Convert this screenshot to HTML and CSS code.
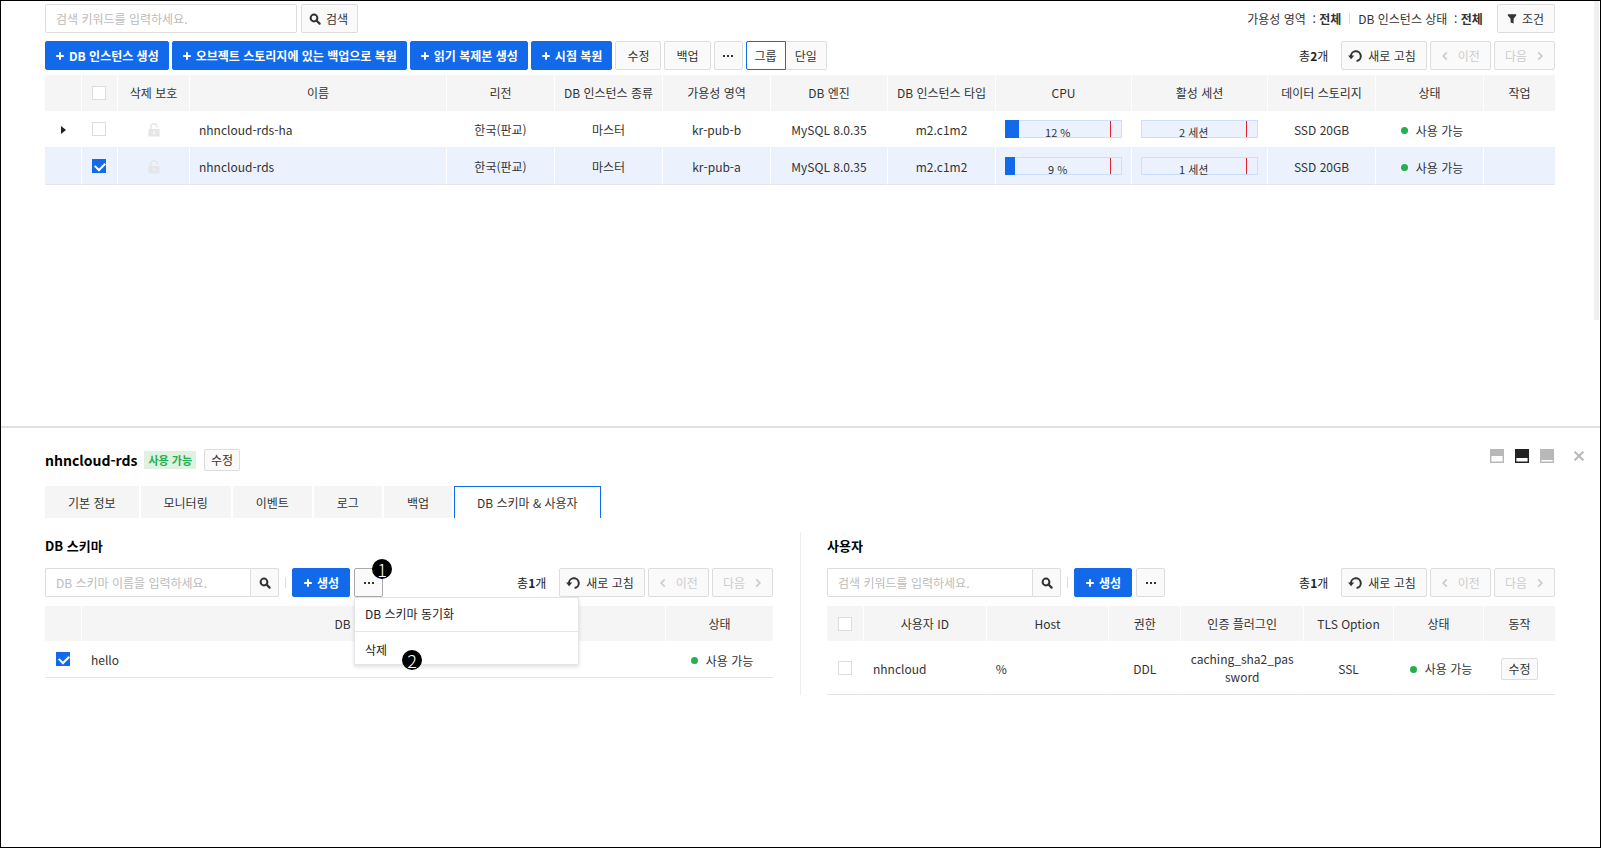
FILE: index.html
```html
<!DOCTYPE html>
<html lang="ko">
<head>
<meta charset="utf-8">
<meta name="viewport" content="width=device-width, initial-scale=1">
<title>DB 인스턴스</title>
<link rel="stylesheet" href="styles.css">
</head>
<body>
<svg class="sprite" aria-hidden="true">
  <symbol id="i-search" viewBox="0 0 12 12"><circle cx="5" cy="5" r="3.4" fill="none" stroke="currentColor" stroke-width="2"/><path d="M7.5 7.5 L10.6 10.6" stroke="currentColor" stroke-width="2.2" stroke-linecap="round"/></symbol>
  <symbol id="i-plus" viewBox="0 0 8 8"><path d="M4 0.2V7.8M0.2 4H7.8" stroke="currentColor" stroke-width="2"/></symbol>
  <symbol id="i-dots" viewBox="0 0 10 4"><path d="M0 1h2v2H0zM4 1h2v2H4zM8 1h2v2H8z" fill="currentColor"/></symbol>
  <symbol id="i-refresh" viewBox="0 0 14 14"><path d="M3 7.6A4.9 4.9 0 1 1 8.6 12" fill="none" stroke="currentColor" stroke-width="2"/><path d="M0 6.4H6.2L3.1 10.2Z" fill="currentColor"/></symbol>
  <symbol id="i-prev" viewBox="0 0 8 10"><path d="M5.8 1.4L2.2 5L5.8 8.6" fill="none" stroke="currentColor" stroke-width="1.7"/></symbol>
  <symbol id="i-next" viewBox="0 0 8 10"><path d="M2.2 1.4L5.8 5L2.2 8.6" fill="none" stroke="currentColor" stroke-width="1.7"/></symbol>
  <symbol id="i-filter" viewBox="0 0 10 10"><path d="M0.8 0.3H9.2V1.6L6.6 4.8V9.6L3.6 8.4V4.8L0.8 1.6Z" fill="currentColor"/></symbol>
  <symbol id="i-lock" viewBox="0 0 12 14"><path d="M2.8 6V3.8A2.9 2.9 0 0 1 8.9 3.6V4.6" fill="none" stroke="currentColor" stroke-width="1.5"/><path fill-rule="evenodd" d="M1 6H11Q11.6 6 11.6 6.6V13Q11.6 13.6 11 13.6H1Q0.4 13.6 0.4 13V6.6Q0.4 6 1 6ZM5.3 8.6V11.2H6.7V8.6Z" fill="currentColor"/></symbol>
  <symbol id="i-caret" viewBox="0 0 5 8"><path d="M0 0L5 4L0 8Z" fill="currentColor"/></symbol>
  <symbol id="i-pane-full" viewBox="0 0 14 14"><path fill-rule="evenodd" d="M0 0H14V14H0ZM1.4 7V12.6H12.6V7Z" fill="currentColor"/></symbol>
  <symbol id="i-pane-half" viewBox="0 0 14 14"><path fill-rule="evenodd" d="M0 0H14V14H0ZM1.4 9V12.6H12.6V9Z" fill="currentColor"/></symbol>
  <symbol id="i-pane-min" viewBox="0 0 14 14"><path fill-rule="evenodd" d="M0 0H14V14H0ZM1.4 11V12.6H12.6V11Z" fill="currentColor"/></symbol>
  <symbol id="i-close" viewBox="0 0 10 10"><path d="M0.6 0.6L9.4 9.4M9.4 0.6L0.6 9.4" stroke="currentColor" stroke-width="2"/></symbol>
</svg>

<div class="page">
  <main class="list-pane">
    <div class="bar">
      <form class="bar-group">
        <input class="field field-wide" type="text" placeholder="검색 키워드를 입력하세요." aria-label="검색 키워드">
        <button class="btn btn-search" type="button"><svg class="ic12"><use href="#i-search"/></svg>검색</button>
      </form>
      <div class="bar-group filters">
        <span>가용성 영역&nbsp; : <b>전체</b></span>
        <span class="sep"></span>
        <span>DB 인스턴스 상태&nbsp; : <b>전체</b></span>
        <button class="btn btn-filter" type="button"><svg class="ic10"><use href="#i-filter"/></svg>조건</button>
      </div>
    </div>

    <div class="bar">
      <div class="bar-group actions">
        <button class="btn primary" type="button"><svg class="ic8"><use href="#i-plus"/></svg>DB 인스턴스 생성</button>
        <button class="btn primary" type="button"><svg class="ic8"><use href="#i-plus"/></svg>오브젝트 스토리지에 있는 백업으로 복원</button>
        <button class="btn primary" type="button"><svg class="ic8"><use href="#i-plus"/></svg>읽기 복제본 생성</button>
        <button class="btn primary" type="button"><svg class="ic8"><use href="#i-plus"/></svg>시점 복원</button>
        <button class="btn" type="button">수정</button>
        <button class="btn" type="button">백업</button>
        <button class="btn btn-more" type="button" aria-label="더 보기"><svg class="dots"><use href="#i-dots"/></svg></button>
        <div class="segment">
          <button class="btn seg on" type="button">그룹</button><button class="btn seg" type="button">단일</button>
        </div>
      </div>
      <div class="bar-group pager">
        <span class="total">총<b>2</b>개</span>
        <button class="btn btn-refresh" type="button"><svg class="ic14"><use href="#i-refresh"/></svg>새로 고침</button>
        <button class="btn btn-page" type="button" disabled><svg class="chev"><use href="#i-prev"/></svg>이전</button>
        <button class="btn btn-page" type="button" disabled>다음<svg class="chev"><use href="#i-next"/></svg></button>
      </div>
    </div>

    <table class="grid instances">
      <colgroup><col class="c36"><col class="c36"><col class="c72"><col><col class="c108"><col class="c108"><col class="c108"><col class="c117"><col class="c108"><col class="c136"><col class="c136"><col class="c108"><col class="c108"><col class="c72"></colgroup>
      <thead>
        <tr><th></th><th><input class="check" type="checkbox" aria-label="전체 선택"></th><th>삭제 보호</th><th>이름</th><th>리전</th><th>DB 인스턴스 종류</th><th>가용성 영역</th><th>DB 엔진</th><th>DB 인스턴스 타입</th><th>CPU</th><th>활성 세션</th><th>데이터 스토리지</th><th>상태</th><th>작업</th></tr>
      </thead>
      <tbody>
        <tr>
          <td><button class="expand" type="button" aria-label="펼치기"><svg class="caret"><use href="#i-caret"/></svg></button></td>
          <td><input class="check" type="checkbox" aria-label="nhncloud-rds-ha 선택"></td>
          <td><svg class="lock"><use href="#i-lock"/></svg></td>
          <td class="left">nhncloud-rds-ha</td><td>한국(판교)</td><td>마스터</td><td>kr-pub-b</td><td>MySQL 8.0.35</td><td>m2.c1m2</td>
          <td class="meter-cell"><div class="meter"><span class="meter-fill" style="width:12%"></span><span class="meter-text">12 %</span></div></td>
          <td class="meter-cell"><div class="meter"><span class="meter-text">2 세션</span></div></td>
          <td>SSD 20GB</td><td><span class="status">사용 가능</span></td><td></td>
        </tr>
        <tr class="selected">
          <td></td>
          <td><input class="check" type="checkbox" checked aria-label="nhncloud-rds 선택"></td>
          <td><svg class="lock"><use href="#i-lock"/></svg></td>
          <td class="left">nhncloud-rds</td><td>한국(판교)</td><td>마스터</td><td>kr-pub-a</td><td>MySQL 8.0.35</td><td>m2.c1m2</td>
          <td class="meter-cell"><div class="meter"><span class="meter-fill" style="width:9%"></span><span class="meter-text">9 %</span></div></td>
          <td class="meter-cell"><div class="meter"><span class="meter-text">1 세션</span></div></td>
          <td>SSD 20GB</td><td><span class="status">사용 가능</span></td><td></td>
        </tr>
      </tbody>
    </table>
    <div class="scroll-thumb"></div>
  </main>

  <section class="detail-pane">
    <header class="detail-head">
      <h1 class="title">nhncloud-rds</h1>
      <span class="tag">사용 가능</span>
      <button class="btn small" type="button">수정</button>
      <div class="pane-tools">
        <button class="icon-btn" type="button" aria-label="크게"><svg class="ic14"><use href="#i-pane-full"/></svg></button>
        <button class="icon-btn active" type="button" aria-label="절반"><svg class="ic14"><use href="#i-pane-half"/></svg></button>
        <button class="icon-btn" type="button" aria-label="작게"><svg class="ic14"><use href="#i-pane-min"/></svg></button>
        <button class="icon-btn close" type="button" aria-label="닫기"><svg class="ic10"><use href="#i-close"/></svg></button>
      </div>
    </header>

    <div class="tabs" role="tablist">
      <button class="tab" role="tab" type="button">기본 정보</button>
      <button class="tab" role="tab" type="button">모니터링</button>
      <button class="tab" role="tab" type="button">이벤트</button>
      <button class="tab" role="tab" type="button">로그</button>
      <button class="tab" role="tab" type="button">백업</button>
      <button class="tab on" role="tab" type="button" aria-selected="true">DB 스키마 &amp; 사용자</button>
    </div>

    <div class="columns">
      <section class="column">
        <h2 class="subtitle">DB 스키마</h2>
        <div class="bar">
          <div class="bar-group">
            <form class="search">
              <input class="field" type="text" placeholder="DB 스키마 이름을 입력하세요." aria-label="DB 스키마 이름">
              <button class="btn btn-icon" type="button" aria-label="검색"><svg class="ic12"><use href="#i-search"/></svg></button>
            </form>
            <span class="sep"></span>
            <button class="btn primary" type="button"><svg class="ic8"><use href="#i-plus"/></svg>생성</button>
            <div class="menu-wrap">
              <button class="btn btn-more open" type="button" aria-label="더 보기" aria-expanded="true"><svg class="dots"><use href="#i-dots"/></svg></button>
              <span class="step step-one">1</span>
              <div class="menu" role="menu">
                <button class="menu-item" role="menuitem" type="button">DB 스키마 동기화</button>
                <button class="menu-item" role="menuitem" type="button">삭제</button>
                <span class="step step-two">2</span>
              </div>
            </div>
          </div>
          <div class="bar-group pager">
            <span class="total">총<b>1</b>개</span>
            <button class="btn btn-refresh" type="button"><svg class="ic14"><use href="#i-refresh"/></svg>새로 고침</button>
            <button class="btn btn-page" type="button" disabled><svg class="chev"><use href="#i-prev"/></svg>이전</button>
            <button class="btn btn-page" type="button" disabled>다음<svg class="chev"><use href="#i-next"/></svg></button>
          </div>
        </div>
        <table class="grid">
          <colgroup><col class="c36"><col><col class="c108"></colgroup>
          <thead><tr><th></th><th>DB 스키마 이름</th><th>상태</th></tr></thead>
          <tbody><tr><td><input class="check" type="checkbox" checked aria-label="hello 선택"></td><td class="left">hello</td><td><span class="status">사용 가능</span></td></tr></tbody>
        </table>
      </section>

      <section class="column">
        <h2 class="subtitle">사용자</h2>
        <div class="bar">
          <div class="bar-group">
            <form class="search">
              <input class="field" type="text" placeholder="검색 키워드를 입력하세요." aria-label="사용자 검색 키워드">
              <button class="btn btn-icon" type="button" aria-label="검색"><svg class="ic12"><use href="#i-search"/></svg></button>
            </form>
            <span class="sep"></span>
            <button class="btn primary" type="button"><svg class="ic8"><use href="#i-plus"/></svg>생성</button>
            <button class="btn btn-more" type="button" aria-label="더 보기"><svg class="dots"><use href="#i-dots"/></svg></button>
          </div>
          <div class="bar-group pager">
            <span class="total">총<b>1</b>개</span>
            <button class="btn btn-refresh" type="button"><svg class="ic14"><use href="#i-refresh"/></svg>새로 고침</button>
            <button class="btn btn-page" type="button" disabled><svg class="chev"><use href="#i-prev"/></svg>이전</button>
            <button class="btn btn-page" type="button" disabled>다음<svg class="chev"><use href="#i-next"/></svg></button>
          </div>
        </div>
        <table class="grid">
          <colgroup><col class="c36"><col><col><col class="c72"><col><col class="c90"><col class="c90"><col class="c72"></colgroup>
          <thead><tr><th><input class="check" type="checkbox" aria-label="전체 선택"></th><th>사용자 ID</th><th>Host</th><th>권한</th><th>인증 플러그인</th><th>TLS Option</th><th>상태</th><th>동작</th></tr></thead>
          <tbody><tr><td><input class="check" type="checkbox" aria-label="nhncloud 선택"></td><td class="left">nhncloud</td><td class="left">%</td><td>DDL</td><td class="wrap">caching_sha2_password</td><td>SSL</td><td><span class="status">사용 가능</span></td><td><button class="btn small" type="button">수정</button></td></tr></tbody>
        </table>
      </section>
    </div>
  </section>
</div>
</body>
</html>
```

FILE: styles.css
```css
* { box-sizing: border-box; }

body {
  margin: 0;
  background: #fff;
  color: #333;
  font-family: "Noto Sans CJK KR", "Noto Sans", sans-serif;
  font-size: 12px;
  line-height: 18px;
}

button, input { font: inherit; color: inherit; }
svg { display: block; flex: none; }
form { margin: 0; }

.sprite { position: absolute; width: 0; height: 0; }
.ic8 { width: 8px; height: 8px; }
.ic10 { width: 10px; height: 10px; }
.ic12 { width: 12px; height: 12px; }
.ic14 { width: 14px; height: 14px; }
.dots { width: 10px; height: 4px; }
.chev { width: 8px; height: 10px; }

.page {
  display: flex;
  flex-direction: column;
  min-height: 100vh;
  border: 1px solid #000;
}

/* Panes */
.list-pane {
  position: relative;
  display: flex;
  flex-direction: column;
  min-height: calc(50vh + 1px);
  padding: 3px 45px 0 44px;
}
.scroll-thumb {
  position: absolute;
  top: 0;
  right: 1px;
  width: 5px;
  height: 75%;
  background: #f0f0f0;
}
.detail-pane {
  flex: 1;
  padding: 21px 45px 0 44px;
  border-top: 2px solid #e0e0e0;
}

/* Toolbars */
.bar {
  display: flex;
  justify-content: space-between;
  margin-bottom: 8px;
}
.list-pane .bar + .bar { margin-bottom: 5px; }
.bar-group { display: flex; align-items: center; gap: 4px; }
.actions, .pager { gap: 3px; }
.total { margin-right: 10px; color: #222; }
.filters { gap: 8px; }
.filters .btn { margin-left: 6px; }
.sep { width: 1px; height: 11px; background: #ddd; }

.btn {
  display: inline-flex;
  align-items: center;
  justify-content: center;
  gap: 5px;
  height: 29px;
  padding: 0 11px;
  border: 1px solid #ddd;
  border-radius: 2px;
  background: #fafafa;
  color: #333;
  white-space: nowrap;
}
.btn.primary {
  min-width: 58px;
  padding: 0 9px 0 10px;
  border-color: #1269ea;
  background: #1269ea;
  color: #fff;
  font-weight: 700;
}
.btn:disabled { color: #ccc; }
.btn-search { padding: 0 9px 0 7px; }
.btn-filter { padding: 0 10px 0 9px; }
.btn-more { width: 29px; padding: 0; }
.btn-more.open { border-color: #aaa; }
.btn-icon { padding: 0 8px; border-radius: 0 2px 2px 0; }
.btn-refresh { gap: 6px; padding: 0 10px 0 6px; }
.btn-page { gap: 9px; padding: 0 10px; }
.btn.small { height: 22px; padding: 0 6px; }

.segment { display: flex; }
.seg { padding: 0 9px; border-left: 0; border-radius: 0 2px 2px 0; }
.seg.on {
  padding: 0 8px;
  border: 1px solid #1269ea;
  border-radius: 2px 0 0 2px;
  background: #fff;
}

.field {
  width: 205px;
  height: 29px;
  padding: 0 10px;
  border: 1px solid #ddd;
  border-radius: 2px;
  background: #fff;
}
.field::placeholder { color: #bbb; opacity: 1; }
.field-wide { width: 252px; }
.search { display: flex; }
.search .field { border-right: 0; border-radius: 2px 0 0 2px; }
.search .btn { width: 29px; }
.search + .sep { margin: 0 2px; }

/* Tables */
.grid {
  width: 100%;
  table-layout: fixed;
  border-collapse: separate;
  border-spacing: 0;
}
.c36 { width: 36px; }
.c72 { width: 72px; }
.c90 { width: 90px; }
.c108 { width: 108px; }
.c117 { width: 117px; }
.c136 { width: 136px; }
.grid th {
  height: 35px;
  padding: 0;
  border-left: 1px solid #fff;
  background: #f5f5f5;
  font-weight: 400;
}
.instances th { height: 36px; }
.grid td {
  height: 37px;
  padding: 2px 9px 0;
  border-left: 1px solid #fff;
  border-bottom: 1px solid #e5e5e5;
  text-align: center;
}
.grid tr > :first-child { border-left: 0; }
.grid .left { text-align: left; }
.grid .wrap { padding: 9px 9px 8px; overflow-wrap: anywhere; }
.grid .meter-cell { padding-top: 0; }
.instances tr:first-child td { border-bottom-color: #f0f0f0; }
.selected td { background: #ebf2fe; }
.grid .check, .lock, .expand { margin: 0 auto; }
.grid td:has(.check) { padding: 0; }
.instances th:has(.check), .instances td:has(.check) { padding: 0 1px 0 0; }

.check {
  display: block;
  appearance: none;
  width: 14px;
  height: 14px;
  border: 1px solid #ddd;
  background: #fff;
}
.check:checked { border-color: #1269ea; background: #1269ea; }
.check:checked::after {
  content: "";
  display: block;
  width: 8px;
  height: 5px;
  margin: 2px;
  border: solid #fff;
  border-width: 0 0 2px 2px;
  transform: rotate(-45deg);
}
.lock { width: 12px; height: 14px; color: #e6e6e6; }
.expand { display: block; padding: 0; border: 0; background: none; color: #222; }
.caret { width: 5px; height: 8px; }

.status {
  display: inline-flex;
  align-items: center;
  gap: 8px;
  padding-left: 5px;
  vertical-align: middle;
}
.status::before {
  content: "";
  width: 7px;
  height: 7px;
  border-radius: 50%;
  background: #27ae50;
}

.meter {
  position: relative;
  height: 18px;
  border: 1px solid #cce0fb;
  background: #ebf2fe;
  font-size: 11px;
}
.meter::after {
  content: "";
  position: absolute;
  top: 0;
  bottom: 0;
  left: 90%;
  width: 1px;
  background: #e0202c;
}
.meter-fill {
  position: absolute;
  top: -1px;
  bottom: -1px;
  left: -1px;
  background: #1269ea;
}
.meter-text { position: relative; display: block; width: 90%; padding-top: 2px; }

/* Detail header and tabs */
.detail-head { display: flex; align-items: center; margin-right: -29px; }
.title { margin: 0 7px 0 0; color: #000; font-size: 14px; font-weight: 700; line-height: 22px; }
.tag {
  margin-right: 8px;
  padding: 0 4px;
  background: #dff2e0;
  color: #27ae55;
  font-size: 11px;
  font-weight: 700;
}
.pane-tools {
  display: flex;
  align-items: center;
  align-self: flex-start;
  gap: 11px;
  margin-left: auto;
}
.icon-btn { padding: 0; border: 0; background: none; color: #b8b8b8; }
.icon-btn.active { color: #222; }
.icon-btn.close { margin-left: 9px; }

.tabs { display: flex; gap: 2px; margin: 15px 0 14px; }
.tab {
  height: 32px;
  padding: 0 22px;
  border: 1px solid #f5f5f5;
  border-bottom: 0;
  background: #f5f5f5;
}
.tab.on { border-color: #1269ea; background: #fff; }

.columns { display: grid; grid-template-columns: repeat(2, minmax(0, 1fr)); }
.column { padding-right: 27px; }
.column + .column { padding: 0 0 0 26px; border-left: 1px solid #eee; }
.column .bar { margin-bottom: 9px; }
.subtitle { margin: 0 0 8px; color: #000; font-size: 13px; font-weight: 700; line-height: 28px; }

/* Menu with numbered steps */
.menu-wrap { position: relative; }
.menu {
  position: absolute;
  top: 29px;
  left: 0;
  z-index: 2;
  width: 225px;
  border: 1px solid #e5e5e5;
  background: #fff;
  box-shadow: 0 2px 4px rgba(0, 0, 0, 0.12);
}
.menu-item {
  display: block;
  width: 100%;
  height: 33px;
  padding: 0 10px 2px;
  border: 0;
  background: none;
  color: #222;
  text-align: left;
}
.menu-item + .menu-item { padding: 3px 10px 0; border-top: 1px solid #e5e5e5; }
.step {
  position: absolute;
  z-index: 3;
  width: 20px;
  height: 20px;
  border-radius: 50%;
  background: #000;
  color: #fff;
  font-size: 18px;
  font-weight: 300;
  line-height: 20px;
  text-align: center;
}
.step-one { top: -9px; right: -9px; }
.step-two { bottom: -6px; left: 47px; }
```
